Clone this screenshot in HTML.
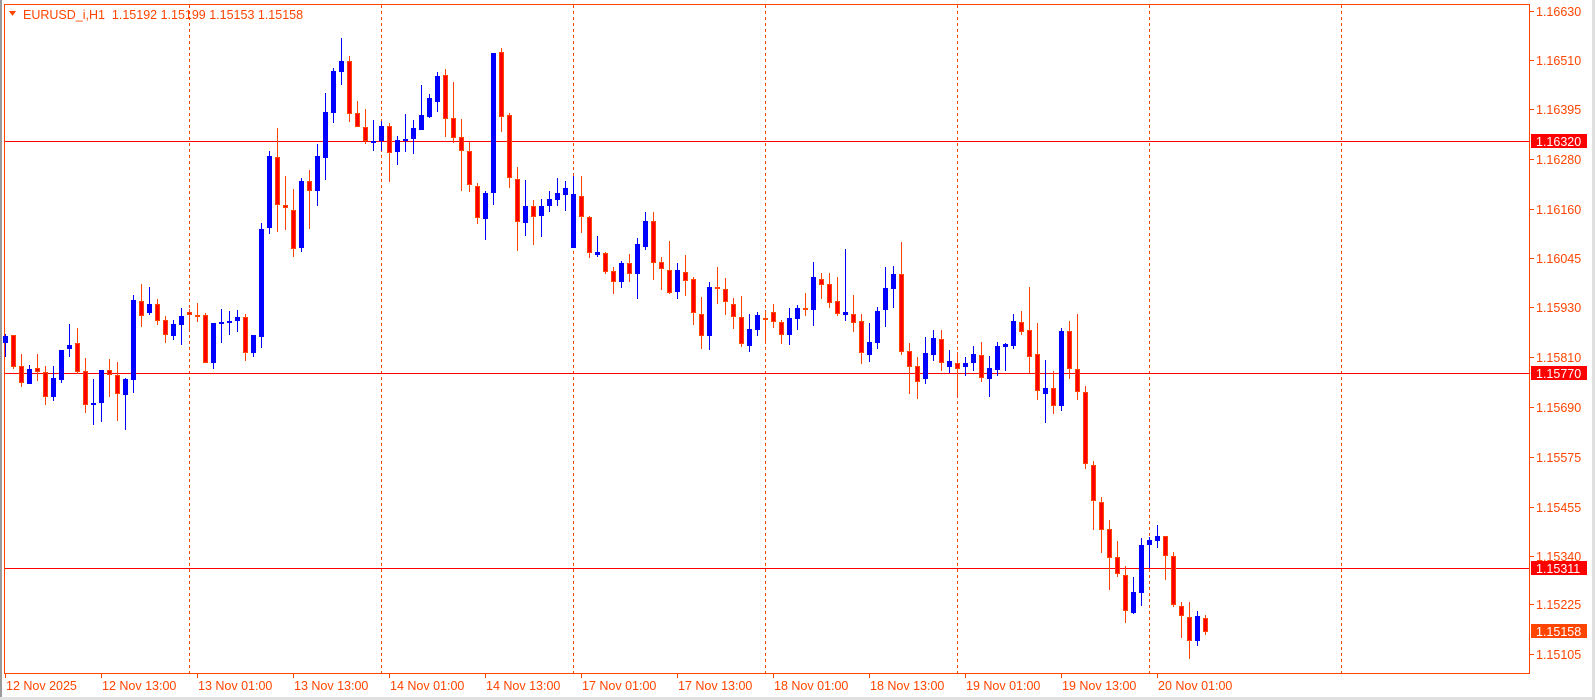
<!DOCTYPE html>
<html><head><meta charset="utf-8">
<style>
html,body{margin:0;padding:0;background:#fff;}
body{width:1595px;height:700px;overflow:hidden;position:relative;font-family:"Liberation Sans",sans-serif;}
svg{position:absolute;left:0;top:0;}
text{font-family:"Liberation Sans",sans-serif;font-size:12.5px;fill:#ff4500;}
</style></head><body>
<svg id="s" width="1595" height="700" xmlns="http://www.w3.org/2000/svg" shape-rendering="crispEdges">
<rect x="0" y="0" width="1595" height="700" fill="#fff"/>
<rect x="0" y="0" width="2" height="700" fill="#9a9a9a"/>
<rect x="0" y="697" width="1595" height="3" fill="#e0e0e0"/>
<rect x="1592" y="0" width="3" height="700" fill="#e0e0e0"/>
<g id="grid"></g>
<rect x="4.5" y="4.5" width="1525" height="669" fill="none" stroke="#ff4500" stroke-width="1"/>
<line x1="5" y1="141.5" x2="1529" y2="141.5" stroke="#ff0000"/>
<line x1="5" y1="373.5" x2="1529" y2="373.5" stroke="#ff0000"/>
<line x1="5" y1="568.5" x2="1529" y2="568.5" stroke="#ff0000"/>
<g id="c"></g>
<g id="ax"></g>
<polygon points="9,11 16,11 12.5,16" fill="#ff4500"/>
<text x="23" y="19" style="white-space:pre">EURUSD_i,H1  1.15192 1.15199 1.15153 1.15158</text>
</svg>
<script>
var NS="http://www.w3.org/2000/svg";
function el(p,t,a,txt){var e=document.createElementNS(NS,t);for(var k in a)e.setAttribute(k,a[k]);if(txt!=null)e.textContent=txt;p.appendChild(e);return e;}
var g=document.getElementById('grid');
for(var x=189;x<1530;x+=192){el(g,'line',{x1:x+0.5,y1:5,x2:x+0.5,y2:673,stroke:'#ff4500','stroke-dasharray':'3,3'});}
var D="b 336 343 334 357|r 335 367 335 369|r 366 383 354 387|b 369 384 365 384|r 368 372 354 381|r 372 397 366 405|b 378 397 366 401|b 350 380 350 383|b 345 349 324 357|r 343 372 328 374|r 371 405 358 413|b 403 404 379 425|b 370 403 370 422|r 370 375 359 397|r 375 394 362 421|b 379 395 378 430|b 300 380 295 393|r 301 316 284 327|b 304 313 287 315|r 304 321 299 325|r 320 335 316 343|b 324 336 320 340|b 316 325 308 345|r 312 315 309 330|r 315 317 303 322|r 315 363 313 363|b 323 363 323 369|b 322 323 309 343|b 321 323 311 335|b 317 321 310 332|r 317 353 314 361|b 335 353 335 357|b 229 337 223 348|b 156 228 151 234|r 157 205 128 232|r 205 208 176 230|r 210 249 189 257|b 181 248 178 252|r 181 191 170 229|b 156 191 144 206|b 112 158 93 180|b 71 113 68 123|b 61 72 38 85|r 61 114 56 122|r 113 127 101 127|r 127 141 109 144|b 141 143 120 151|b 126 141 121 151|r 126 153 123 182|b 140 152 136 165|b 139 141 114 152|b 128 139 120 154|b 115 130 85 130|b 98 117 94 118|b 76 102 72 112|r 75 119 69 137|r 118 138 82 143|r 137 151 119 191|r 151 185 142 192|r 186 218 183 224|b 193 219 191 240|b 53 193 53 205|r 52 117 48 132|r 115 178 113 188|r 179 222 167 251|b 206 223 180 236|r 206 217 200 245|b 206 216 199 237|b 199 206 191 212|b 193 200 178 206|b 188 195 181 211|b 194 248 176 248|r 196 217 176 233|r 217 253 216 258|b 252 255 236 257|r 253 272 252 274|r 271 282 267 294|b 263 282 261 288|r 263 274 254 282|b 244 274 238 299|b 221 247 212 250|r 221 263 212 280|r 262 269 257 290|r 270 293 241 294|b 270 292 263 299|r 272 281 255 296|r 279 313 277 325|r 314 336 297 349|b 287 336 282 350|r 287 288 267 304|r 289 302 278 315|r 304 317 298 329|r 317 344 296 347|b 329 346 314 352|b 315 330 312 336|r 318 320 310 343|r 312 322 304 328|r 322 335 320 344|b 318 335 308 345|b 308 319 305 330|r 308 310 293 316|b 277 310 262 326|r 279 285 273 299|r 284 303 273 308|r 301 314 277 316|b 312 315 249 321|r 314 323 295 332|r 321 353 314 364|b 342 355 323 362|b 311 343 307 349|b 288 310 267 327|b 274 289 266 308|r 274 352 242 355|r 351 367 343 394|r 366 382 357 399|b 353 379 337 384|b 338 355 330 361|r 339 363 330 371|b 361 367 350 373|r 363 369 352 397|b 363 367 357 376|b 354 363 346 371|r 355 378 342 382|b 368 379 356 397|b 346 370 342 376|b 344 347 343 371|b 321 346 314 349|r 322 332 311 335|r 330 357 287 373|r 354 391 323 400|b 388 394 360 423|r 388 406 371 414|b 331 406 328 411|r 331 369 321 379|r 369 392 314 400|r 392 464 386 469|r 465 501 461 530|r 502 530 497 553|r 529 558 520 590|r 557 574 541 577|r 575 611 566 623|b 592 613 577 614|b 545 593 538 606|b 540 545 537 568|b 536 541 525 548|r 536 556 536 580|r 556 605 552 607|r 606 616 602 638|r 617 641 602 659|b 616 641 611 646|r 618 632 615 635";
var c=document.getElementById('c');
D.split('|').forEach(function(s,i){
 var p=s.split(' ');var col=p[0];var t=+p[1],b=+p[2],h=+p[3],l=+p[4];
 var x=5+8*i;
 var wc=col=='b'?'#0000ff':'#ff4500';
 el(c,'rect',{x:x,y:h,width:1,height:Math.max(1,l-h),fill:wc});
 var hh=Math.max(2,b-t);
 if(col=='b'){el(c,'rect',{x:x-2,y:t,width:5,height:hh,fill:'#0000ff'});}
 else{el(c,'rect',{x:x-2,y:t,width:5,height:hh,fill:'#ff4500'});
  if(hh>2)el(c,'rect',{x:x-1,y:t+1,width:3,height:hh-2,fill:'#ff0000'});}
});
var ax=document.getElementById('ax');
var P=[["1.16630",11],["1.16510",60],["1.16395",109],["1.16280",159],["1.16160",209],["1.16045",258],["1.15930",307],["1.15810",357],["1.15690",407],["1.15575",457],["1.15455",507],["1.15340",556],["1.15225",604],["1.15105",654]];
P.forEach(function(p){el(ax,'rect',{x:1530,y:p[1],width:4,height:1,fill:'#ff4500'});el(ax,'text',{x:1536,y:p[1]+5},p[0]);});
[["1.16320",141,'#ff0000'],["1.15770",373,'#ff0000'],["1.15311",568,'#ff0000'],["1.15158",631,'#ff4500']].forEach(function(p){
 el(ax,'rect',{x:1531,y:p[1]-7,width:56,height:14,fill:p[2]});
 el(ax,'text',{x:1536,y:p[1]+5,style:'fill:#fff'},p[0]);});
var T=["12 Nov 2025","12 Nov 13:00","13 Nov 01:00","13 Nov 13:00","14 Nov 01:00","14 Nov 13:00","17 Nov 01:00","17 Nov 13:00","18 Nov 01:00","18 Nov 13:00","19 Nov 01:00","19 Nov 13:00","20 Nov 01:00"];
T.forEach(function(t,i){var x=5+96*i;el(ax,'rect',{x:x,y:674,width:1,height:4,fill:'#ff4500'});el(ax,'text',{x:x+1,y:690},t);});
</script>
</body></html>
